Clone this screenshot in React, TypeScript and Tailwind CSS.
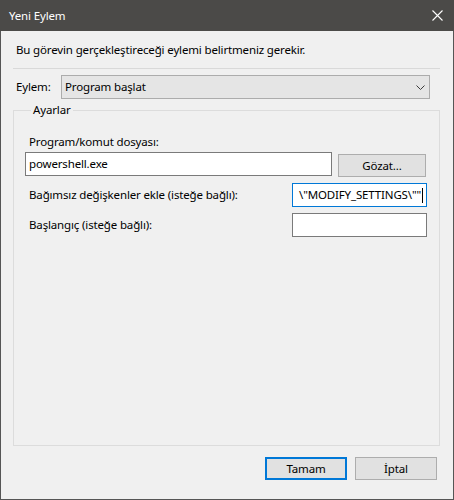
import { ReactNode } from "react";

const font = { fontFamily: '"Noto Sans", "Segoe UI", sans-serif' };

function Field({ children, focused }: { children?: ReactNode; focused?: boolean }) {
    return (
        <div
            className={`h-[24px] bg-white border flex items-center overflow-hidden whitespace-nowrap ${
                focused ? "border-[#0078d7] justify-end pr-[3px]" : "border-[#7a7a7a] pl-[3px]"
            }`}
        >
            {children}
        </div>
    );
}

function Button({ label, primary }: { label: string; primary?: boolean }) {
    return (
        <button
            className={`w-[82px] h-[23px] bg-[#e1e1e1] text-black flex items-center justify-center ${
                primary ? "border-2 border-[#0078d7]" : "border border-[#adadad]"
            }`}
        >
            {label}
        </button>
    );
}

export default function App() {
    return (
        <div
            className="w-[454px] h-[500px] flex flex-col bg-[#f0f0f0] border-x border-b border-[#555555] text-[11.5px] tracking-[-0.15px] leading-[16px] text-black"
            style={font}
        >
            {/* title bar */}
            <div className="h-[31px] -mx-px bg-[#4b4a48] flex items-center pl-[9px] pr-[11px] text-white shrink-0">
                <span>Yeni Eylem</span>
                <svg className="ml-auto" width="11" height="11" viewBox="0 0 11 11">
                    <path d="M0.5 0.5 L10.5 10.5 M10.5 0.5 L0.5 10.5" stroke="#ffffff" strokeWidth="1.1" />
                </svg>
            </div>

            <div className="flex flex-col px-[12px]">
                <p className="pl-[3px] mt-[11px]">Bu görevin gerçekleştireceği eylemi belirtmeniz gerekir.</p>
                <div className="h-px bg-[#d9d9d9] mt-[10px] mr-px" />

                <div className="flex items-center mt-[6px]">
                    <span className="pl-[3px]">Eylem:</span>
                    <div className="ml-auto mr-[11px] w-[369px] h-[24px] bg-[#e5e5e5] border border-[#acacac] flex items-center pl-[3px] pr-[4px]">
                        <span>Program başlat</span>
                        <svg className="ml-auto" width="9" height="5" viewBox="0 0 9 5">
                            <path d="M0.5 0.5 L4.5 4.5 L8.5 0.5" stroke="#3c3c3c" fill="none" strokeWidth="1" />
                        </svg>
                    </div>
                </div>

                <fieldset className="mt-[3px] h-[344px] border border-[#dcdcdc] pl-[11px] pr-[12px] mr-px">
                    <legend className="ml-[6px] px-[2px]">Ayarlar</legend>

                    <div className="pl-[4px] mt-[16px]">Program/komut dosyası:</div>
                    <div className="flex items-start mt-[2px] h-[25px]">
                        <div className="w-[307px]">
                            <Field>powershell.exe</Field>
                        </div>
                        <button className="ml-auto mr-px mt-[2px] w-[88px] h-[23px] bg-[#e1e1e1] border border-[#adadad] flex items-center justify-center">
                            Gözat...
                        </button>
                    </div>

                    <div className="flex items-center mt-[6px]">
                        <span className="pl-[4px]">Bağımsız değişkenler ekle (isteğe bağlı):</span>
                        <div className="ml-auto w-[135px]">
                            <Field focused>
                                <span>\"MODIFY_SETTINGS\""</span>
                                <span className="ml-px w-px h-[15px] bg-black shrink-0" />
                            </Field>
                        </div>
                    </div>

                    <div className="flex items-center mt-[6px]">
                        <span className="pl-[4px]">Başlangıç (isteğe bağlı):</span>
                        <div className="ml-auto w-[135px]">
                            <Field />
                        </div>
                    </div>
                </fieldset>

                <div className="flex justify-end gap-[8px] mt-[11px] pr-[4px]">
                    <Button label="Tamam" primary />
                    <Button label="İptal" />
                </div>
            </div>
        </div>
    );
}
